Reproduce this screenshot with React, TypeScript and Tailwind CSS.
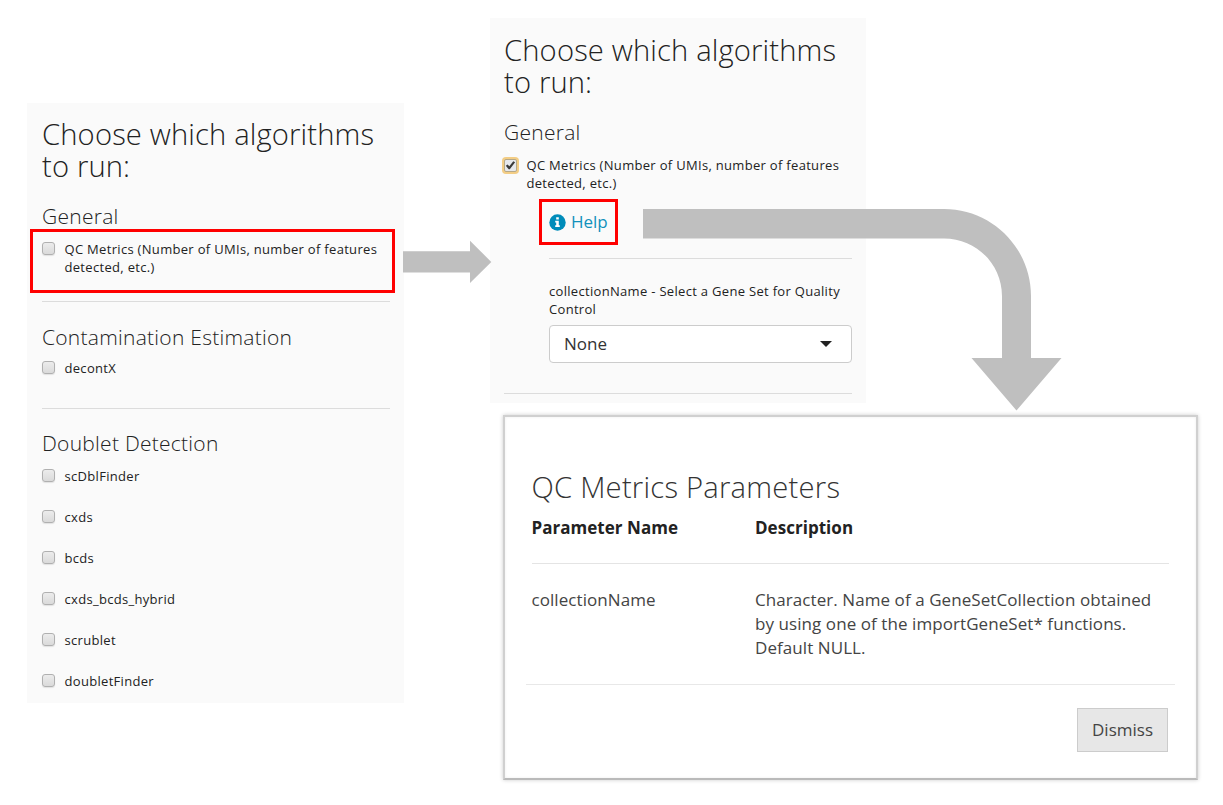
import React from "react";

function Title({ children }: { children: React.ReactNode }) {
  return <h1 className="h-16 whitespace-nowrap text-[29.2px] font-light leading-8 tracking-[0.14px] text-[#222]">{children}</h1>;
}

function Section({ children }: { children: React.ReactNode }) {
  return <h2 className="h-[22px] whitespace-nowrap text-[21px] font-light leading-[20px] tracking-[0.26px] text-[#222]">{children}</h2>;
}

function Box({ checked = false }: { checked?: boolean }) {
  return (
    <span
      className={
        checked
          ? "mt-[2.5px] flex size-[13px] shrink-0 items-center justify-center rounded-[2px] border border-[#b5a888] bg-[#e6e8ec] ring-2 ring-[#f3cd85]"
          : "mt-[2px] block size-[13px] shrink-0 rounded-[3px] border border-[#b0b0b0] bg-linear-to-b from-[#ececec] to-[#dadada] shadow-[0_1px_1px_#e2e2e2]"
      }
    >
      {checked && (
        <svg width="11" height="11" viewBox="0 0 11 11" className="shrink-0">
          <path d="M.8 5.8 2.6 4.600 4.300 6.300 8.300 1.300 10.100 2.200 4.800 9.300 3.700 9.300z" fill="#3a3a3a" />
        </svg>
      )}
    </span>
  );
}

function Check({ children, checked = false }: { children: React.ReactNode; checked?: boolean }) {
  return (
    <label className="flex items-start gap-[9.5px] whitespace-nowrap text-[13px] leading-[18px] tracking-[0.31px] text-[#222]">
      <Box checked={checked} />
      <span>{children}</span>
    </label>
  );
}

const detectors = ["scDblFinder", "cxds", "bcds", "cxds_bcds_hybrid", "scrublet", "doubletFinder"];

export default function App() {
  return (
    <main className="relative flex h-[805px] w-[1223px] items-start overflow-hidden bg-white pl-[27px] font-['Open_Sans',sans-serif]">
      <section className="mt-[103px] h-[600px] w-[377px] shrink-0 bg-[#fafafa] pl-[15px] pr-[14px] pt-[15px]">
        <Title>Choose which algorithms<br />to run:</Title>
        <div className="mt-6"><Section>General</Section></div>
        <div className="mt-3 h-[61px]">
          <Check>QC Metrics (Number of UMIs, number of features<br />detected, etc.)</Check>
        </div>
        <hr className="border-[#dcdcdc]" />
        <div className="mt-[25px]"><Section>Contamination Estimation</Section></div>
        <div className="mt-[10px] h-[49px]"><Check>decontX</Check></div>
        <hr className="border-[#dcdcdc]" />
        <div className="mt-6"><Section>Doublet Detection</Section></div>
        <div className="mt-3 flex flex-col gap-[23px]">
          {detectors.map((name) => <Check key={name}>{name}</Check>)}
        </div>
      </section>

      <div className="ml-[86px] mt-[18px]">
        <section className="h-[385px] w-[376px] bg-[#fafafa] pl-[14px] pr-[14px] pt-4">
          <Title>Choose which algorithms<br />to run:</Title>
          <div className="mt-6"><Section>General</Section></div>
          <div className="mt-3"><Check checked>QC Metrics (Number of UMIs, number of features<br />detected, etc.)</Check></div>
          <div className="ml-[35px] mt-[7px] flex h-[46px] w-[79px] items-center gap-[5px] border-[3px] border-[#ff0000] pl-[7px]">
            <svg width="17" height="17" viewBox="0 0 17 17" className="shrink-0">
              <circle cx="8.5" cy="8.5" r="8.2" fill="#008cba" />
              <path d="M7.2 3.3h2.6v2.3H7.2zM6.2 6.8h3.6v4.5h1v1.8H6.2v-1.8h1V8.5h-1z" fill="#fff" />
            </svg>
            <span className="text-[17px] leading-6 text-[#1191bc]">Help</span>
          </div>
          <div className="ml-[45px] mt-[13px] w-[303px] border-t border-[#dcdcdc] pt-[23px]">
            <p className="whitespace-nowrap text-[13px] leading-[18px] tracking-[0.31px] text-[#222]">
              collectionName - Select a Gene Set for Quality<br />Control
            </p>
            <div className="mt-[7px] flex h-[38px] items-center justify-between rounded-[4px] border border-[#ccc] bg-white pl-[14px] pr-[19px]">
              <span className="text-[17px] leading-6 text-[#333]">None</span>
              <svg width="12" height="6" viewBox="0 0 12 6"><path d="M0 0h12L6 6z" fill="#222" /></svg>
            </div>
          </div>
          <hr className="mt-[30px] border-[#dcdcdc]" />
        </section>

        <section className="ml-[13px] mt-[12px] h-[365px] w-[695px] border-2 border-[#d0d0d0] border-b-[#bababa] bg-white px-[21px] pt-[54px] shadow-[0_0_4px_#ccc,inset_0_0_3px_#eee]">
          <div className="pl-[5.5px] pr-[6.5px]">
            <h2 className="h-8 whitespace-nowrap text-[29.2px] font-light leading-8 tracking-[0.23px] text-[#333]">QC Metrics Parameters</h2>
            <div className="mt-[13px] grid h-[48px] grid-cols-[223.5px_1fr] border-b border-[#e4e4e4] text-[17px] font-bold leading-6 tracking-[0.03px] text-[#222]">
              <span>Parameter Name</span>
              <span>Description</span>
            </div>
            <div className="mt-[24px] grid grid-cols-[223.5px_1fr] whitespace-nowrap text-[17px] leading-6 tracking-[0.07px] text-[#444]">
              <span>collectionName</span>
              <span>Character. Name of a GeneSetCollection obtained<br />by using one of the importGeneSet* functions.<br />Default NULL.</span>
            </div>
          </div>
          <div className="mt-[24px] flex justify-end border-t border-[#e8e8e8] pr-[7px] pt-[23px]">
            <button className="h-[44px] w-[91px] border border-[#ccc] bg-[#e7e7e7] text-[17px] leading-6 text-[#444]">Dismiss</button>
          </div>
        </section>
      </div>

      <div className="absolute left-[30px] top-[229px] h-[64px] w-[365px] border-[3px] border-[#ff0000]" />
      <svg className="absolute left-[403px] top-[240px]" width="89" height="44" viewBox="0 0 89 44">
        <path d="M0 11.3h67V.7L88.3 22 67 43V32.5H0z" fill="#bfbfbf" />
      </svg>
      <svg className="absolute left-[643px] top-[208px]" width="420" height="204" viewBox="0 0 420 204">
        <path d="M0 1h301c48 0 87 39 87 87v62h30.500L373.500 202.500 328.500 150H359V88c0-32-26-57.500-58-57.500H0z" fill="#bfbfbf" />
      </svg>
    </main>
  );
}
